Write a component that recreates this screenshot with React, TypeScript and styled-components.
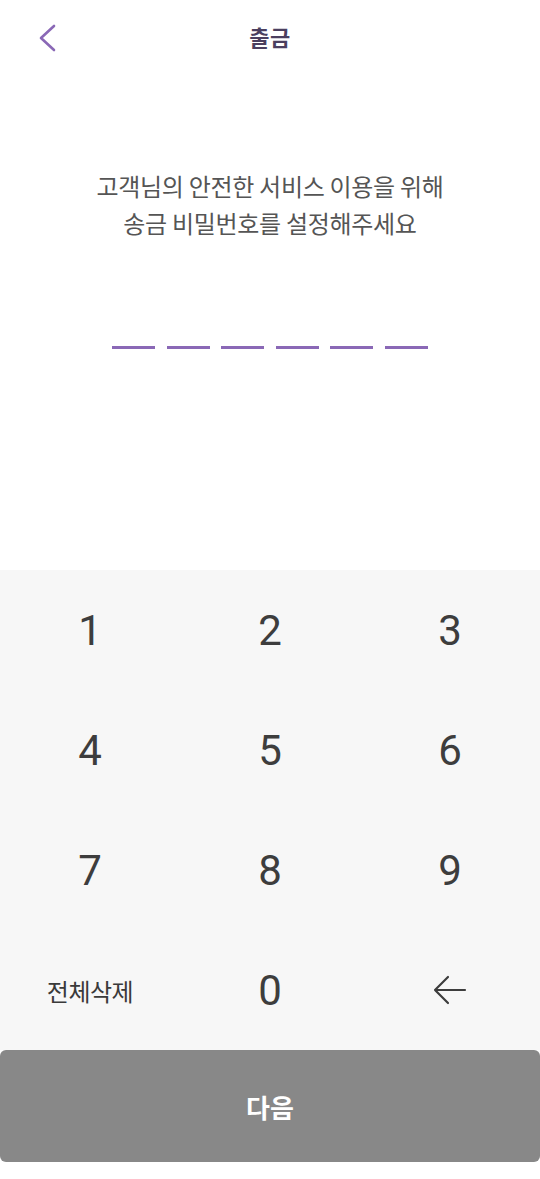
import React from 'react';
import styled, { createGlobalStyle } from 'styled-components';

const GlobalStyle = createGlobalStyle`
  html, body {
    margin: 0;
    padding: 0;
    background: #ffffff;
  }
  body {
    font-family: "Noto Sans CJK KR", "Noto Sans", Roboto, sans-serif;
  }
`;

const Screen = styled.div`
  width: 540px;
  height: 1179px;
  display: flex;
  flex-direction: column;
  background: #ffffff;
  overflow: hidden;
`;

const Header = styled.header`
  height: 76px;
  display: grid;
  grid-template-columns: 100px 1fr 100px;
  align-items: center;
`;

const BackButton = styled.button`
  border: none;
  background: none;
  padding: 0 0 0 36px;
  height: 76px;
  display: flex;
  align-items: center;
  cursor: pointer;
`;

const Title = styled.h1`
  margin: 0 0 4px;
  text-align: center;
  font-size: 22px;
  font-weight: 700;
  color: #4b3f5f;
  letter-spacing: 0.5px;
`;

const Body = styled.main`
  flex: 1;
  display: flex;
  flex-direction: column;
  align-items: center;
`;

const Guide = styled.p`
  margin: 91px 0 0;
  text-align: center;
  font-size: 24px;
  line-height: 37px;
  color: #555555;
  letter-spacing: -0.3px;
`;

const DashRow = styled.div`
  margin-top: 105px;
  display: flex;
  gap: 11.5px;
`;

const Dash = styled.span<{ $filled?: boolean }>`
  width: 43px;
  height: 3px;
  background: ${(p) => (p.$filled ? '#5d3f8a' : '#8a68b6')};
`;

const Keypad = styled.div`
  background: #f7f7f7;
  display: grid;
  grid-template-columns: repeat(3, 1fr);
  grid-auto-rows: 120px;
`;

const Key = styled.button<{ $small?: boolean }>`
  border: none;
  background: none;
  font-family: ${(p) => (p.$small ? 'inherit' : 'Roboto, "Noto Sans", sans-serif')};
  font-size: ${(p) => (p.$small ? '24px' : '42px')};
  font-weight: 400;
  color: ${(p) => (p.$small ? '#3a3a3a' : '#3d3d3d')};
  letter-spacing: ${(p) => (p.$small ? '-0.5px' : '0')};
  display: flex;
  align-items: center;
  justify-content: center;
  cursor: pointer;
`;

const Footer = styled.div`
  height: 129px;
  background: #ffffff;
`;

const NextButton = styled.button`
  width: 100%;
  height: 112px;
  border: none;
  border-radius: 6px;
  background: #888888;
  color: #ffffff;
  font-family: inherit;
  font-size: 26px;
  font-weight: 700;
  cursor: pointer;
`;

const ChevronLeft = () => (
  <svg width="22" height="30" viewBox="0 0 22 30" fill="none">
    <path d="M18 3 L5 15 L18 27" stroke="#8a68b6" strokeWidth="2.6" strokeLinecap="round" strokeLinejoin="round" />
  </svg>
);

const BackArrow = () => (
  <svg width="36" height="32" viewBox="0 0 36 32" fill="none">
    <path d="M33 16 H3 M16 3 L3 16 L16 29" stroke="#3d3d3d" strokeWidth="2.2" strokeLinecap="round" strokeLinejoin="round" />
  </svg>
);

const digits = ['1', '2', '3', '4', '5', '6', '7', '8', '9'];

export default function App() {
  return (
    <>
      <GlobalStyle />
      <Screen>
        <Header>
          <BackButton aria-label="뒤로">
            <ChevronLeft />
          </BackButton>
          <Title>출금</Title>
          <span />
        </Header>
        <Body>
          <Guide>
            고객님의 안전한 서비스 이용을 위해
            <br />
            송금 비밀번호를 설정해주세요
          </Guide>
          <DashRow>
            {Array.from({ length: 6 }).map((_, i) => (
              <Dash key={i} />
            ))}
          </DashRow>
        </Body>
        <Keypad>
          {digits.map((d) => (
            <Key key={d}>{d}</Key>
          ))}
          <Key $small>전체삭제</Key>
          <Key>0</Key>
          <Key aria-label="지우기">
            <BackArrow />
          </Key>
        </Keypad>
        <Footer>
          <NextButton>다음</NextButton>
        </Footer>
      </Screen>
    </>
  );
}
